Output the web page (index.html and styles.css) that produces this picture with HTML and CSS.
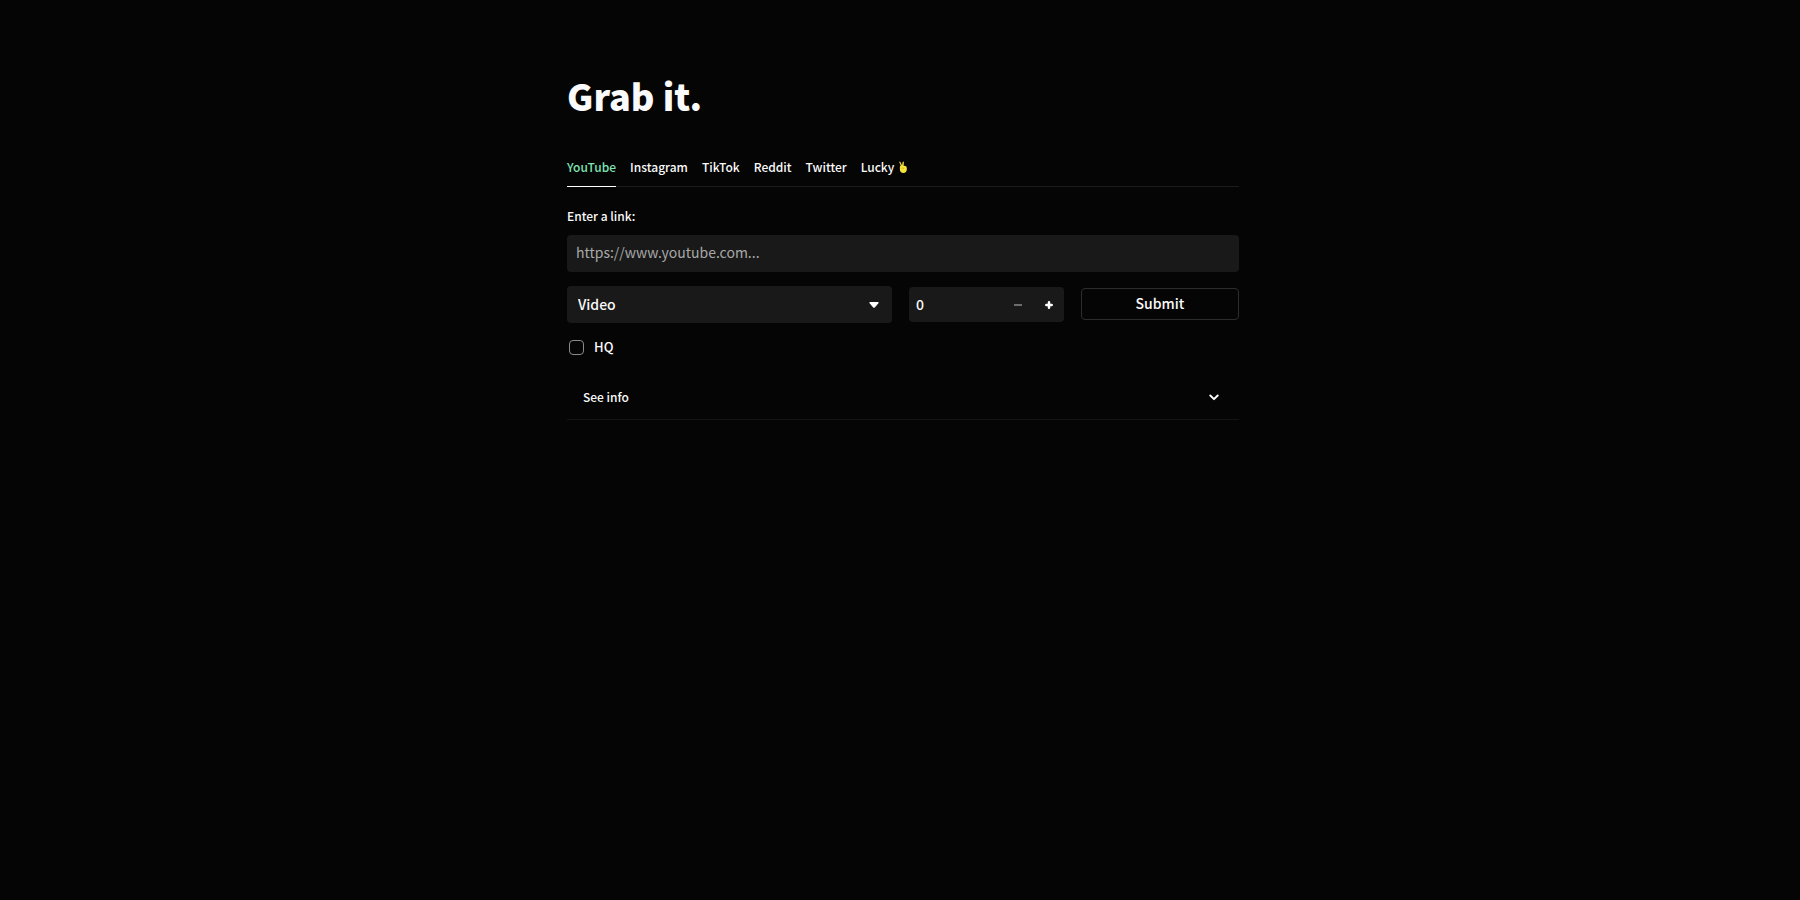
FILE: index.html
```html
<!DOCTYPE html>
<html lang="en">
<head>
<meta charset="utf-8">
<meta name="viewport" content="width=device-width, initial-scale=1">
<title>Grab it.</title>
<link rel="stylesheet" href="styles.css">
</head>
<body>
<main class="page">
  <h1 class="title">Grab it.</h1>
  <div class="tabs" role="tablist">
    <button class="tab tab-active" role="tab" aria-selected="true">YouTube</button>
    <button class="tab" role="tab">Instagram</button>
    <button class="tab" role="tab">TikTok</button>
    <button class="tab" role="tab">Reddit</button>
    <button class="tab" role="tab">Twitter</button>
    <button class="tab" role="tab">Lucky
      <svg class="hand" viewBox="0 0 8 12" aria-hidden="true"><path fill="#f7e43b" d="M.2 1Q.8.2 1.400 1L3 4.300 3.700 1Q4.400.2 4.900 1L4.600 4.800Q7.800 4.600 7.800 6.800V8.600Q7.600 12 4.400 12 1 11.800.9 8.500V5.500L1.700 4.600Z"/><path fill="none" stroke="#c49b16" stroke-width=".6" d="M2.600 7.500Q3.800 6.400 5 7.600"/></svg>
    </button>
  </div>
  <form class="form">
    <label class="label" for="link">Enter a link:</label>
    <input class="field link" id="link" type="text" placeholder="https://www.youtube.com...">
    <div class="row">
      <div class="select-wrap">
        <select class="field select" aria-label="Format"><option>Video</option></select>
        <svg class="caret" viewBox="0 0 10 6" aria-hidden="true"><path fill="#fff" d="M1 0H9Q10 .4 9.400 1.300L6 5.300Q5 6.300 4 5.300L.6 1.300Q0 .4 1 0Z"/></svg>
      </div>
      <div class="number">
        <input class="number-input" type="text" inputmode="numeric" value="0" aria-label="Start">
        <button class="step" type="button" aria-label="Decrease"><svg class="sign" viewBox="0 0 10 10"><path stroke="#888" stroke-width="1.500" d="M1 5H9"/></svg></button>
        <button class="step" type="button" aria-label="Increase"><svg class="sign" viewBox="0 0 10 10"><path stroke="#fff" stroke-width="2.500" stroke-linecap="round" d="M2.300 5H7.700M5 2.300V7.700"/></svg></button>
      </div>
      <button class="submit" type="button">Submit</button>
    </div>
    <label class="check"><input class="box" type="checkbox">HQ</label>
  </form>
  <details class="info">
    <summary class="summary">See info
      <svg class="chevron" viewBox="0 0 10 7" aria-hidden="true"><path fill="none" stroke="#fff" stroke-width="1.900" stroke-linecap="round" stroke-linejoin="round" d="M1.300 1.500L5 5.200 8.700 1.500"/></svg>
    </summary>
  </details>
</main>
</body>
</html>
```
FILE: styles.css
```css
* {
  box-sizing: border-box;
}

body {
  margin: 0;
  padding: 0 16px 0 22px;
  background: #050505;
  color: #fafafa;
  font: 500 12px/20px "Noto Sans CJK SC", "Noto Sans", sans-serif;
}

button,
input,
select {
  margin: 0;
  border: 0;
  font: inherit;
  color: inherit;
}

button {
  background: none;
  cursor: pointer;
}

.page {
  max-width: 672px;
  margin: 0 auto;
  padding: 71px 0 48px;
}

.title {
  margin: 0;
  font-size: 36px;
  font-weight: 900;
  line-height: 48px;
}

.tabs {
  display: flex;
  gap: 14px;
  height: 39px;
  margin-top: 29px;
  border-bottom: 1px solid #1a1b1d;
}

.tab {
  display: flex;
  align-items: center;
  gap: 5px;
  height: 39px;
  padding: 0;
  border-bottom: 1px solid transparent;
  white-space: nowrap;
}

.tab-active {
  color: #7fe3b4;
  border-bottom-color: #fff;
}

.hand {
  width: 8px;
  height: 12px;
}

.form {
  margin-top: 19px;
}

.label {
  display: block;
  margin-bottom: 9px;
}

.field {
  display: block;
  width: 100%;
  height: 37px;
  border-radius: 4px;
  background: #191919;
  font-size: 14px;
}

.link {
  padding: 0 9px 3px;
  font-weight: 400;
}

.link::placeholder {
  color: #a8a8a8;
  opacity: 1;
}

.row {
  display: grid;
  grid-template-columns: minmax(0, 325fr) minmax(0, 155fr) minmax(0, 158fr);
  gap: 17px;
  align-items: center;
  margin-top: 14px;
}

.select-wrap {
  position: relative;
}

.select {
  appearance: none;
  padding: 0 40px 2px 11px;
}

.caret {
  position: absolute;
  top: 16px;
  right: 13px;
  width: 10px;
  height: 6px;
  pointer-events: none;
}

.number {
  display: flex;
  height: 35px;
  border-radius: 4px;
  background: #191919;
}

.number-input {
  flex: 1;
  min-width: 0;
  padding: 0 7px 2px;
  background: none;
  font-size: 14px;
}

.step {
  display: grid;
  place-items: center;
  width: 31px;
  padding: 0;
}

.sign {
  width: 10px;
  height: 10px;
}

.submit {
  height: 32px;
  margin-bottom: 1px;
  padding: 0 0 2px;
  border: 1px solid #2c2c2d;
  border-radius: 4px;
  font-size: 14px;
}

.check {
  display: flex;
  align-items: center;
  gap: 10px;
  width: max-content;
  margin-top: 14px;
  padding-left: 2px;
  font-size: 13px;
}

.box {
  appearance: none;
  width: 15px;
  height: 15px;
  border: 1px solid #8a8a8a;
  border-radius: 4px;
}

.info {
  margin-top: 20px;
  border-bottom: 1px solid #141415;
}

.summary {
  display: flex;
  align-items: center;
  justify-content: space-between;
  height: 42px;
  padding: 0 20px 2px 16px;
  list-style: none;
  cursor: pointer;
}

.chevron {
  width: 10px;
  height: 7px;
}
```
